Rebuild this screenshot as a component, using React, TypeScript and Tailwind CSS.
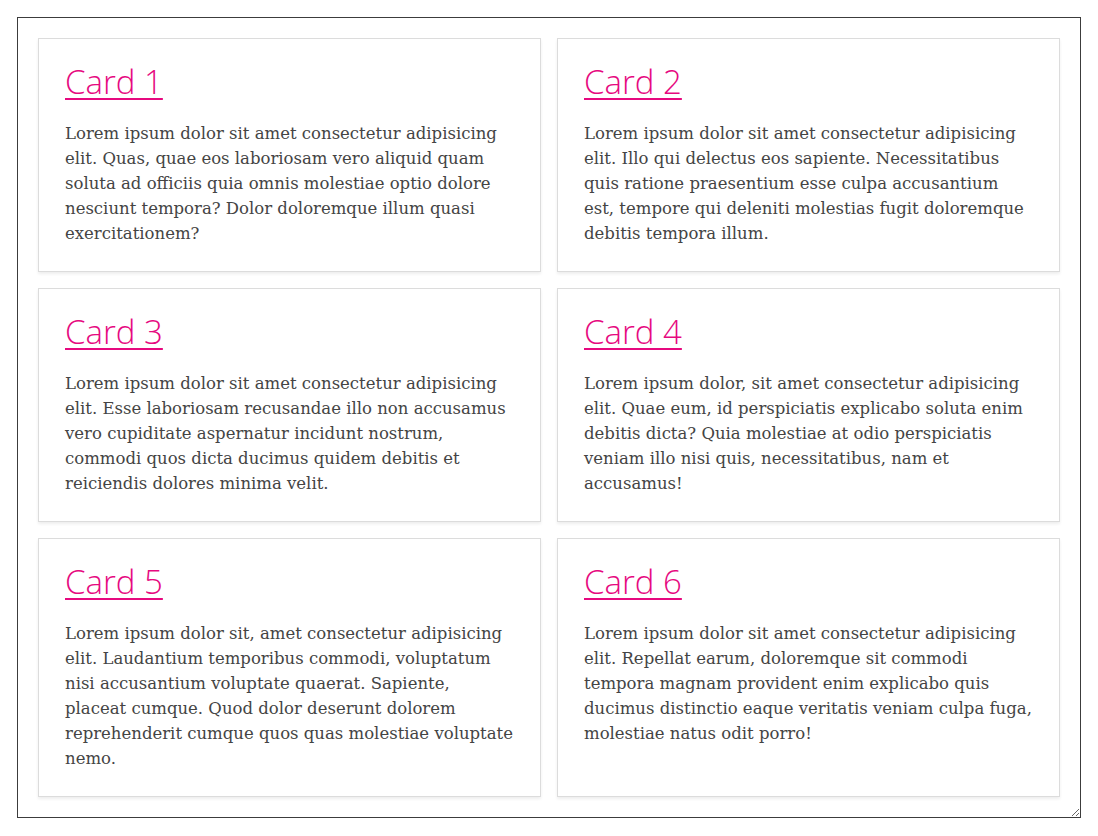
import React from 'react'

const cards = [
  {
    title: 'Card 1',
    body: 'Lorem ipsum dolor sit amet consectetur adipisicing elit. Quas, quae eos laboriosam vero aliquid quam soluta ad officiis quia omnis molestiae optio dolore nesciunt tempora? Dolor doloremque illum quasi exercitationem?',
  },
  {
    title: 'Card 2',
    body: 'Lorem ipsum dolor sit amet consectetur adipisicing elit. Illo qui delectus eos sapiente. Necessitatibus quis ratione praesentium esse culpa accusantium est, tempore qui deleniti molestias fugit doloremque debitis tempora illum.',
  },
  {
    title: 'Card 3',
    body: 'Lorem ipsum dolor sit amet consectetur adipisicing elit. Esse laboriosam recusandae illo non accusamus vero cupiditate aspernatur incidunt nostrum, commodi quos dicta ducimus quidem debitis et reiciendis dolores minima velit.',
  },
  {
    title: 'Card 4',
    body: 'Lorem ipsum dolor, sit amet consectetur adipisicing elit. Quae eum, id perspiciatis explicabo soluta enim debitis dicta? Quia molestiae at odio perspiciatis veniam illo nisi quis, necessitatibus, nam et accusamus!',
  },
  {
    title: 'Card 5',
    body: 'Lorem ipsum dolor sit, amet consectetur adipisicing elit. Laudantium temporibus commodi, voluptatum nisi accusantium voluptate quaerat. Sapiente, placeat cumque. Quod dolor deserunt dolorem reprehenderit cumque quos quas molestiae voluptate nemo.',
  },
  {
    title: 'Card 6',
    body: 'Lorem ipsum dolor sit amet consectetur adipisicing elit. Repellat earum, doloremque sit commodi tempora magnam provident enim explicabo quis ducimus distinctio eaque veritatis veniam culpa fuga, molestiae natus odit porro!',
  },
]

function Card({ title, body }: { title: string; body: string }) {
  return (
    <div className="border border-[#dcdcdc] bg-white px-[26px] pt-[23px] pb-[25px] shadow-[0_2px_3px_rgba(0,0,0,0.07)]">
      <h2 className="font-['Open_Sans',sans-serif] text-[33px] leading-[40px] font-light text-[#e6097f]">
        <a href="#" className="underline decoration-2 underline-offset-[4px]">
          {title}
        </a>
      </h2>
      <p className="mt-[19px] font-['DejaVu_Serif',serif] text-[16.5px] leading-[25px] text-[#444]">
        {body}
      </p>
    </div>
  )
}

export default function App() {
  return (
    <div className="min-h-screen bg-white pt-[17px] pl-[17px]">
      <div className="resize overflow-auto w-[1064px] border border-[#3c3c3c] p-5">
        <div className="grid grid-cols-2 gap-4">
          {cards.map((c) => (
            <Card key={c.title} title={c.title} body={c.body} />
          ))}
        </div>
      </div>
    </div>
  )
}
